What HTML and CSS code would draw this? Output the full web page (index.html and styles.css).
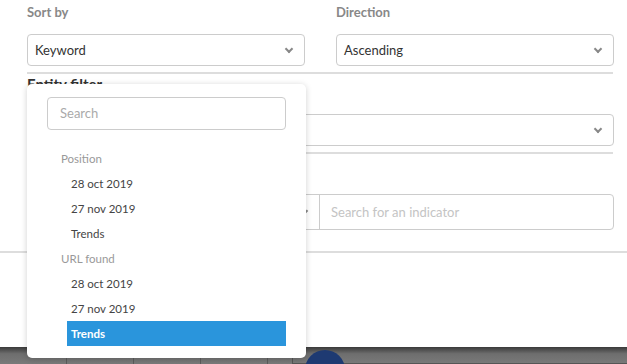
FILE: index.html
```html
<!DOCTYPE html>
<html lang="en">
<head>
  <meta charset="UTF-8" />
  <title>Sort options</title>
  <link rel="stylesheet" href="styles.css">
</head>
<body>

<div class="modal">
  <div class="modal-body">
    <div class="two-cols">
      <div class="field">
        <label class="field-label">Sort by</label>
        <div class="select"><span>Keyword</span><i class="chevron"></i></div>
      </div>
      <div class="field">
        <label class="field-label">Direction</label>
        <div class="select"><span>Ascending</span><i class="chevron"></i></div>
      </div>
    </div>
    <hr class="sep">

    <div class="field">
      <label class="section-label">Entity filter</label>
      <div class="select"><span></span><i class="chevron"></i></div>
    </div>
    <hr class="sep">

    <div class="field">
      <label class="section-label">Indicator filter</label>
      <div class="combo">
        <div class="combo-select"><span>Position</span><i class="chevron"></i></div>
        <div class="combo-input">Search for an indicator</div>
      </div>
    </div>
  </div>
  <div class="modal-footer"></div>

  <!-- Open dropdown -->
  <div class="dropdown">
    <div class="dropdown-search">Search</div>
    <ul class="options">
      <li class="group">Position</li>
      <li class="item">28 oct 2019</li>
      <li class="item">27 nov 2019</li>
      <li class="item">Trends</li>
      <li class="group">URL found</li>
      <li class="item">28 oct 2019</li>
      <li class="item">27 nov 2019</li>
      <li class="item selected">Trends</li>
    </ul>
  </div>
</div>

<div class="backdrop">
  <span class="col"></span>
  <span class="col"></span>
  <span class="col"></span>
  <span class="col"></span>
  <span class="bubble"></span>
  <span class="col wide"></span>
</div>

</body>
</html>
```

FILE: styles.css
```css
body {
  margin: 0;
  font-family: Lato, 'Open Sans', sans-serif;
  background: #fff;
  color: #333;
  width: 627px;
  height: 364px;
  overflow: hidden;
}

.modal {
  position: relative;
  height: 347px;
  background: #fff;
}

.modal-body {
  padding: 0 13px 0 27px;
}

.two-cols {
  display: grid;
  grid-template-columns: 278px 278px;
  column-gap: 31px;
}

.field-label {
  display: block;
  height: 24px;
  line-height: 24px;
  font-size: 13px;
  font-weight: bold;
  color: #888;
  margin-bottom: 10px;
}

.section-label {
  display: block;
  font-size: 15px;
  font-weight: bold;
  color: #333;
  line-height: 18px;
  margin-top: 1px;
}

.select {
  display: flex;
  align-items: center;
  justify-content: space-between;
  height: 30px;
  border: 1px solid #ccc;
  border-radius: 4px;
  padding: 0 12px 0 7px;
  font-size: 13px;
  color: #333;
}

.field .section-label + .select {
  margin-top: 21px;
}

.chevron {
  display: block;
  width: 4px;
  height: 4px;
  border-right: 2px solid #888;
  border-bottom: 2px solid #888;
  transform: rotate(45deg);
  margin-top: -3px;
}

.sep {
  border: none;
  border-top: 2px solid #ddd;
  margin: 6px 1px 0 0;
}

.combo {
  display: flex;
  height: 34px;
  margin-top: 21px;
  border: 1px solid #ccc;
  border-radius: 4px;
}

.combo-select {
  box-sizing: border-box;
  width: 292px;
  display: flex;
  align-items: center;
  justify-content: space-between;
  padding: 0 12px 0 7px;
  border-right: 1px solid #ccc;
  font-size: 13px;
}

.combo-input {
  flex: 1;
  display: flex;
  align-items: center;
  padding-left: 11px;
  font-size: 13px;
  color: #c4c4c4;
}

.modal-footer {
  margin-top: 21px;
  border-top: 2px solid #ddd;
}

/* Dropdown menu over the form */
.dropdown {
  position: absolute;
  left: 27px;
  top: 84px;
  width: 239px;
  height: 248px;
  padding: 13px 20px;
  background: #fff;
  border-radius: 5px;
  box-shadow: 0 1px 6px rgba(0, 0, 0, 0.18);
  z-index: 10;
}

.dropdown-search {
  height: 31px;
  line-height: 31px;
  border: 1px solid #ccc;
  border-radius: 4px;
  padding-left: 12px;
  font-size: 13px;
  color: #aaa;
}

.options {
  list-style: none;
  margin: 16px 0 0;
  padding: 0;
}

.options li {
  height: 25px;
  line-height: 25px;
  font-size: 11.5px;
}

.group {
  padding-left: 14px;
  color: #999;
}

.item {
  margin-left: 20px;
  padding-left: 4px;
  color: #444;
}

.item.selected {
  background: #2a95dc;
  color: #fff;
  font-weight: bold;
}

.backdrop {
  position: relative;
  display: flex;
  height: 17px;
  overflow: hidden;
  background: linear-gradient(#3a3a3a, #6e6e6e 40%, #7a7a7a);
}

.col {
  width: 66px;
  border-right: 1px solid #5c5c5c;
}

.col.wide {
  flex: 1;
  border-right: none;
  border-left: 1px solid #555;
  border-bottom: 1px solid #555;
  margin-left: 24px;
}

.bubble {
  position: absolute;
  left: 305px;
  top: 3px;
  width: 40px;
  height: 40px;
  border-radius: 50%;
  background: #1e3a72;
}
```
